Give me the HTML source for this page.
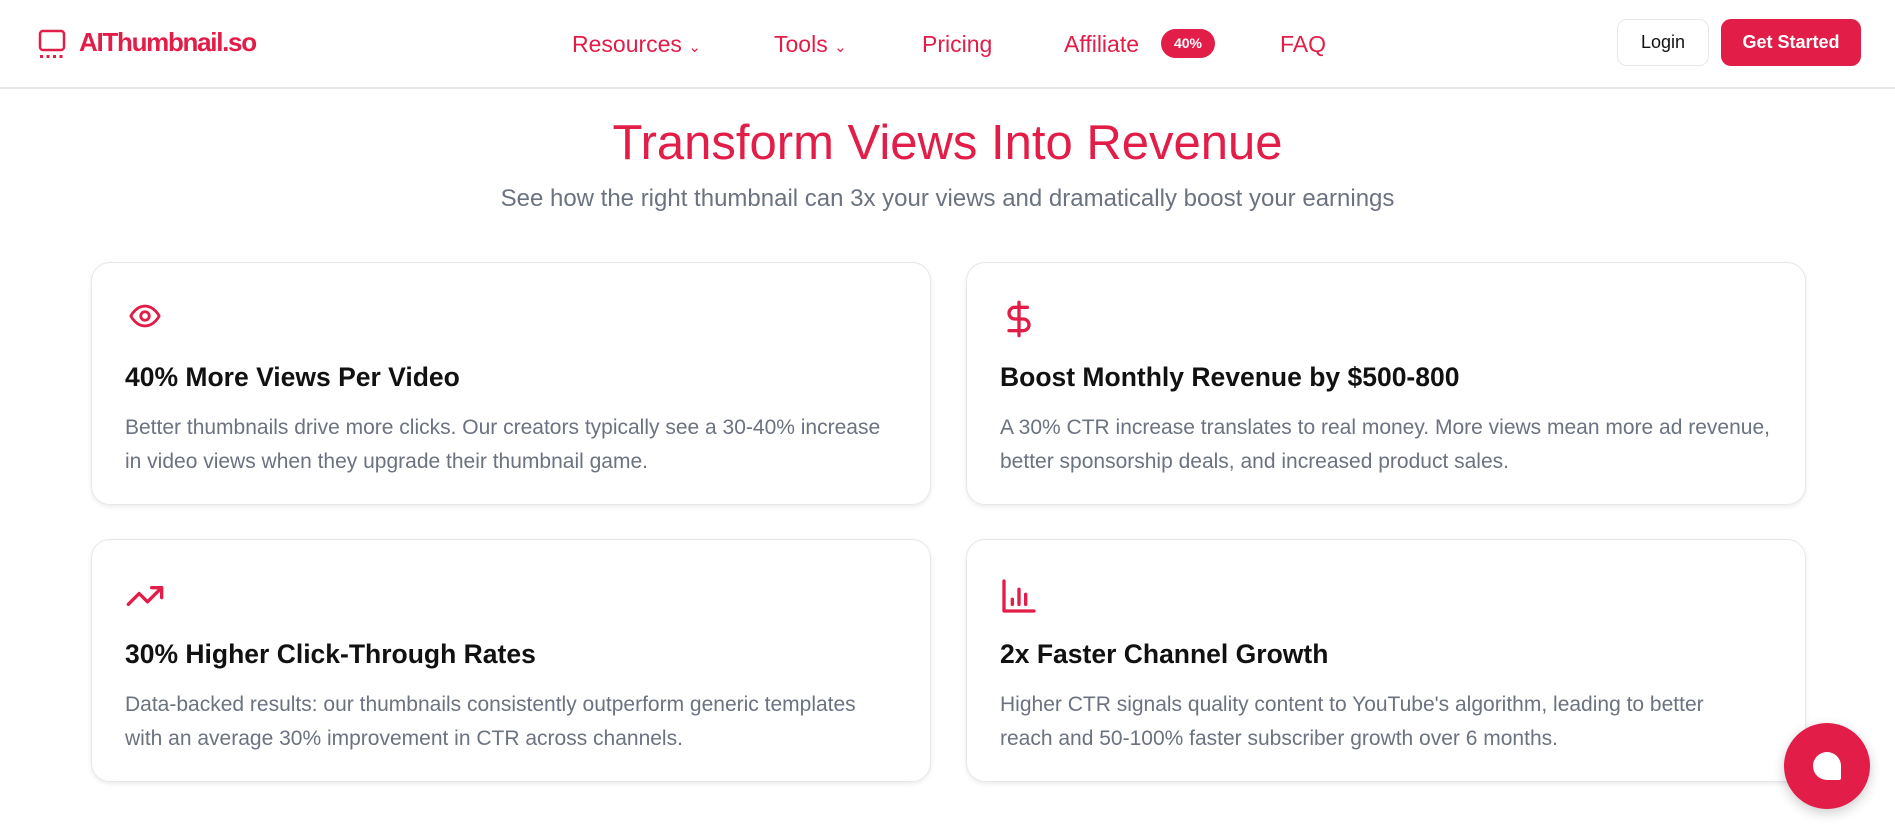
<!DOCTYPE html>
<html><head><meta charset="utf-8"><style>
*{box-sizing:border-box;margin:0;padding:0}
body{width:1895px;height:829px;overflow:hidden;background:#fff;font-family:"Liberation Sans",sans-serif;position:relative}
.hdr{position:absolute;left:0;top:0;width:1895px;height:89px;border-bottom:2px solid #e5e7eb}
.red{color:#e11d48}
.abs{position:absolute}
.nav{position:absolute;top:29px;font-size:23px;color:#e11d48;line-height:30px}
.card{position:absolute;width:840px;height:243px;border:1.5px solid #e5e7eb;border-radius:19px;box-shadow:0 2px 5px rgba(0,0,0,.08)}
.card svg{position:absolute;left:32px;top:36px}
.card h3{position:absolute;left:33px;top:99px;font-size:26.5px;font-weight:bold;color:#111}
.card p{position:absolute;left:33px;top:148px;width:762px;font-size:21px;line-height:34px;color:#6b7280}
</style></head><body>
<div class="hdr">
<svg class="abs" style="left:38px;top:29px" width="28" height="30" viewBox="0 0 28 30" fill="none" stroke="#e11d48" stroke-width="2.5"><rect x="2" y="2" width="24" height="19" rx="3"/><g fill="#e11d48" stroke="none"><rect x="2" y="26" width="3" height="3"/><rect x="8.5" y="26" width="3" height="3"/><rect x="15" y="26" width="3" height="3"/><rect x="21.5" y="26" width="3" height="3"/></g></svg>
<div class="abs red" style="left:79px;top:27px;font-size:26px;font-weight:bold;letter-spacing:-1.3px">AIThumbnail.so</div>
<div class="nav" style="left:572px">Resources <span style="font-size:15px">&#8964;</span></div>
<div class="nav" style="left:774px">Tools <span style="font-size:15px">&#8964;</span></div>
<div class="nav" style="left:922px">Pricing</div>
<div class="nav" style="left:1064px">Affiliate</div>
<div class="abs" style="left:1161px;top:29px;width:54px;height:29px;border-radius:15px;background:#e11d48;color:#fff;font-size:14px;font-weight:bold;text-align:center;line-height:29px">40%</div>
<div class="nav" style="left:1280px">FAQ</div>
<div class="abs" style="left:1617px;top:19px;width:92px;height:47px;border:1.5px solid #e5e7eb;border-radius:10px;text-align:center;line-height:44px;font-size:18px;color:#111">Login</div>
<div class="abs" style="left:1721px;top:19px;width:140px;height:47px;border-radius:10px;background:#e11d48;text-align:center;line-height:47px;font-size:18px;color:#fff;font-weight:bold">Get Started</div>
</div>
<div class="abs red" style="left:0;width:1895px;top:115px;text-align:center;font-size:49px">Transform Views Into Revenue</div>
<div class="abs" style="left:0;width:1895px;top:185px;text-align:center;font-size:24px;color:#6b7280">See how the right thumbnail can 3x your views and dramatically boost your earnings</div>

<div class="card" style="left:91px;top:262px">
<svg width="42" height="34" viewBox="0 0 24 24" fill="none" stroke="#e11d48" stroke-width="2" stroke-linecap="round" stroke-linejoin="round"><path d="M2 12s3.5-7 10-7 10 7 10 7-3.5 7-10 7S2 12 2 12z"/><circle cx="12" cy="12" r="3"/></svg>
<h3>40% More Views Per Video</h3>
<p>Better thumbnails drive more clicks. Our creators typically see a 30-40% increase in video views when they upgrade their thumbnail game.</p></div>
<div class="card" style="left:966px;top:262px">
<svg width="40" height="40" viewBox="0 0 24 24" fill="none" stroke="#e11d48" stroke-width="2" stroke-linecap="round" stroke-linejoin="round"><path d="M12 2v20M17 5H9.5a3.5 3.5 0 0 0 0 7h5a3.5 3.5 0 0 1 0 7H6"/></svg>
<h3>Boost Monthly Revenue by $500-800</h3>
<p style="width:785px">A 30% CTR increase translates to real money. More views mean more ad revenue, better sponsorship deals, and increased product sales.</p></div>
<div class="card" style="left:91px;top:539px">
<svg width="42" height="40" viewBox="0 0 24 24" fill="none" stroke="#e11d48" stroke-width="2" stroke-linecap="round" stroke-linejoin="round"><path d="M22 7l-8.5 8.5-5-5L2 17M16 7h6v6"/></svg>
<h3>30% Higher Click-Through Rates</h3>
<p>Data-backed results: our thumbnails consistently outperform generic templates with an average 30% improvement in CTR across channels.</p></div>
<div class="card" style="left:966px;top:539px">
<svg width="40" height="40" viewBox="0 0 24 24" fill="none" stroke="#e11d48" stroke-width="2" stroke-linecap="round" stroke-linejoin="round"><path d="M3 3v18h18M8 17v-3M12 17V8M16 17v-6"/></svg>
<h3>2x Faster Channel Growth</h3>
<p style="width:720px">Higher CTR signals quality content to YouTube's algorithm, leading to better reach and 50-100% faster subscriber growth over 6 months.</p></div>

<div class="abs" style="left:1784px;top:723px;width:86px;height:86px;border-radius:50%;background:#e11d48;box-shadow:0 4px 12px rgba(0,0,0,.2)"></div>
<div class="abs" style="left:1813px;top:752px;width:28px;height:28px;background:#fff;border-radius:14px 14px 2px 14px"></div>
</body></html>
